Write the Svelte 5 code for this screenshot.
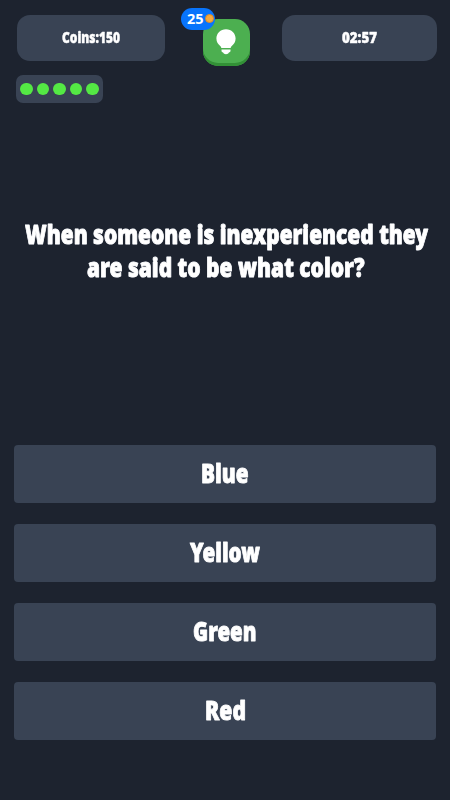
<script>
  const answers = [
    { label: 'Blue', width: 47.5 },
    { label: 'Yellow', width: 70 },
    { label: 'Green', width: 63.5 },
    { label: 'Red', width: 41 }
  ];
  const question = [
    { text: 'When someone is inexperienced they', width: 403 },
    { text: 'are said to be what color?', width: 277.5 }
  ];
  const lives = 5;
</script>

{#snippet label(text, width, height, size, baseline)}
  <svg class="label" {width} {height} aria-label={text}>
    <text x="0" y={baseline} font-size={size} stroke-width={size / 28} textLength={width} lengthAdjust="spacingAndGlyphs">{text}</text>
  </svg>
{/snippet}

<main>
  <header>
    <div class="pill coins">{@render label('Coins:150', 58, 20, 15, 15.3)}</div>
    <button class="hint" aria-label="Hint">
      <svg class="bulb" width="20" height="26" viewBox="0 0 20 26">
        <path d="M10 .3C4.5.3.4 4.4.4 9.6c0 3.5 1.8 5.8 3.8 7.4.8.6 1 1.1 1.1 2.1h9.4c.1-1 .3-1.5 1.1-2.1 2-1.6 3.8-3.9 3.8-7.4C19.6 4.4 15.5.3 10 .3Z" />
        <path d="M5.5 20.5h9v1.2c0 1.2-.8 1.5-1.6 1.8-.5 1-1.4 1.7-2.9 1.7s-2.4-.7-2.9-1.7c-.8-.3-1.6-.6-1.6-1.8Z" />
      </svg>
      <span class="price">25<i></i></span>
    </button>
    <div class="pill timer">{@render label('02:57', 35, 20, 15, 15.3)}</div>
  </header>
  <div class="lives">
    {#each Array(lives) as _}<span></span>{/each}
  </div>
  <section class="question">
    {#each question as line}
      {@render label(line.text, line.width, 40, 26, 28)}
    {/each}
  </section>
  <section class="answers">
    {#each answers as a}
      <button class="answer">{@render label(a.label, a.width, 40, 26, 28.7)}</button>
    {/each}
  </section>
</main>

<style>
  :global(body) { background: #1d232f; }
  main {
    box-sizing: border-box;
    width: 450px;
    height: 800px;
    padding: 15px 13px 0 17px;
    background: #1d232f;
    display: flex;
    flex-direction: column;
    font-family: "Noto Sans", "Open Sans", sans-serif;
  }
  button { border: 0; padding: 0; font: inherit; }
  header { display: flex; justify-content: space-between; height: 60px; }
  .pill {
    height: 46px;
    border-radius: 13px;
    background: #394354;
    display: flex;
    align-items: center;
    justify-content: center;
  }
  .coins { width: 148px; }
  .timer { width: 155px; }
  .label { display: block; overflow: visible; flex: none; }
  .label text {
    fill: #fff;
    stroke: #fff;
    stroke-linejoin: round;
    font-weight: 900;
    font-stretch: condensed;
    filter: drop-shadow(0 .5px .5px #172238);
  }
  .hint {
    position: relative;
    width: 47px;
    height: 47px;
    margin: 4px 0 0 5px;
    border-radius: 15px;
    background: #4caf50;
    box-shadow: inset 0 -3px #329036;
    display: flex;
    justify-content: center;
    padding-top: 9.5px;
  }
  .bulb { fill: #fff; display: block; }
  .price {
    position: absolute;
    left: -21.5px;
    top: -11px;
    box-sizing: border-box;
    width: 34px;
    height: 22px;
    padding: 0 1px 2px 6px;
    border-radius: 11px;
    background: #0874fc;
    color: #fff;
    font-size: 14.5px;
    font-weight: 700;
    line-height: 19px;
    display: flex;
    align-items: center;
    justify-content: space-between;
  }
  .price i {
    box-sizing: border-box;
    width: 9px;
    height: 9px;
    border-radius: 50%;
    background: #f9a93a;
    border: 1.5px solid #d88a2d;
    flex: none;
    margin-top: 1px;
  }
  .lives {
    box-sizing: border-box;
    width: 87px;
    height: 28px;
    margin-left: -1px;
    padding: 0 4px;
    border-radius: 7px;
    background: #394354;
    display: flex;
    align-items: center;
    justify-content: space-between;
  }
  .lives span { width: 12.8px; height: 12.8px; border-radius: 50%; background: #54e944; }
  .question {
    margin: 113px 2px 0 0;
    height: 229px;
    display: flex;
    flex-direction: column;
    align-items: center;
  }
  .question :global(svg) { margin-bottom: -7.3px; }
  .answers {
    display: flex;
    flex-direction: column;
    gap: 21px;
    margin: 0 1.3px 0 -2.7px;
  }
  .answer {
    height: 58px;
    border-radius: 4px;
    background: #394354;
    display: flex;
    align-items: center;
    justify-content: center;
  }
</style>
